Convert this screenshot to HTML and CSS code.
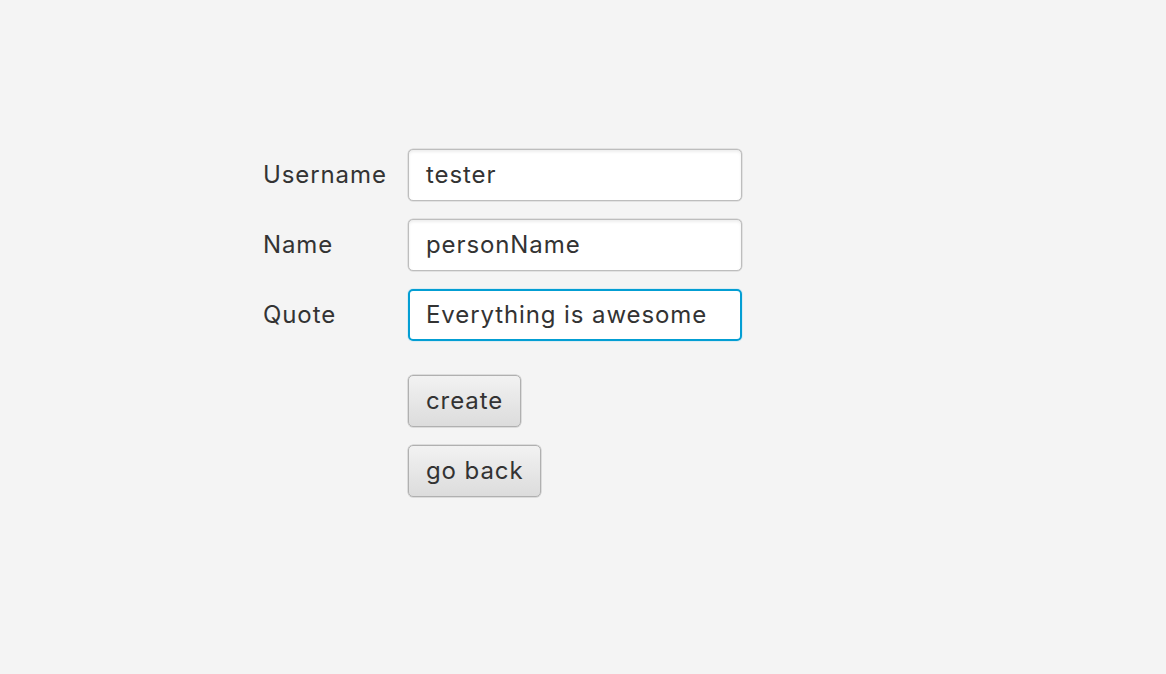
FILE: index.html
```html
<!DOCTYPE html>
<html>
<head>
<meta charset="utf-8">
<link rel="stylesheet" href="styles.css">
</head>
<body>
<div class="page">
  <form class="form">
    <label class="label">Username</label>
    <div class="field">tester</div>
    <label class="label">Name</label>
    <div class="field">personName</div>
    <label class="label">Quote</label>
    <div class="field focused">Everything is awesome</div>
    <div class="spacer"></div>
    <div class="buttons">
      <button type="button" class="btn">create</button>
      <button type="button" class="btn">go back</button>
    </div>
  </form>
</div>
</body>
</html>
```
FILE: styles.css
```css
html, body {
  margin: 0;
  padding: 0;
  background: #f4f4f4;
}
.page {
  width: 1166px;
  height: 674px;
  padding: 149px 0 0 263px;
  box-sizing: border-box;
  font-family: "Inter", "Open Sans", sans-serif;
  font-size: 24px;
  letter-spacing: 0.9px;
  color: #333333;
}
.form {
  display: grid;
  grid-template-columns: 145px 334px;
  row-gap: 18px;
  align-items: center;
}
.label {
  line-height: 52px;
}
.field {
  height: 52px;
  box-sizing: border-box;
  border: 1px solid #bdbdbd;
  border-radius: 5px;
  background: #ffffff;
  box-shadow: 0 0 0 0.5px #d0d0d0, inset 0 2px 3px rgba(0,0,0,0.07);
  padding: 0 17px;
  line-height: 50px;
  white-space: nowrap;
}
.field.focused {
  border: 2px solid #039ed3;
  padding: 0 16px;
  line-height: 48px;
  box-shadow: 0 0 0 1px #dcecf3;
}
.spacer {
  grid-column: 1;
}
.buttons {
  grid-column: 2;
  display: flex;
  flex-direction: column;
  align-items: flex-start;
  gap: 18px;
  margin-top: 16px;
}
.btn {
  height: 52px;
  box-sizing: border-box;
  border: 1px solid #b0b0b0;
  border-radius: 5px;
  background: linear-gradient(#f2f2f2, #dcdcdc);
  box-shadow: 0 0 0 0.5px #c4c4c4;
  font-family: inherit;
  font-size: 24px;
  letter-spacing: 0.9px;
  color: #333333;
  padding: 0 17px;
  margin: 0;
  line-height: 50px;
}
```
